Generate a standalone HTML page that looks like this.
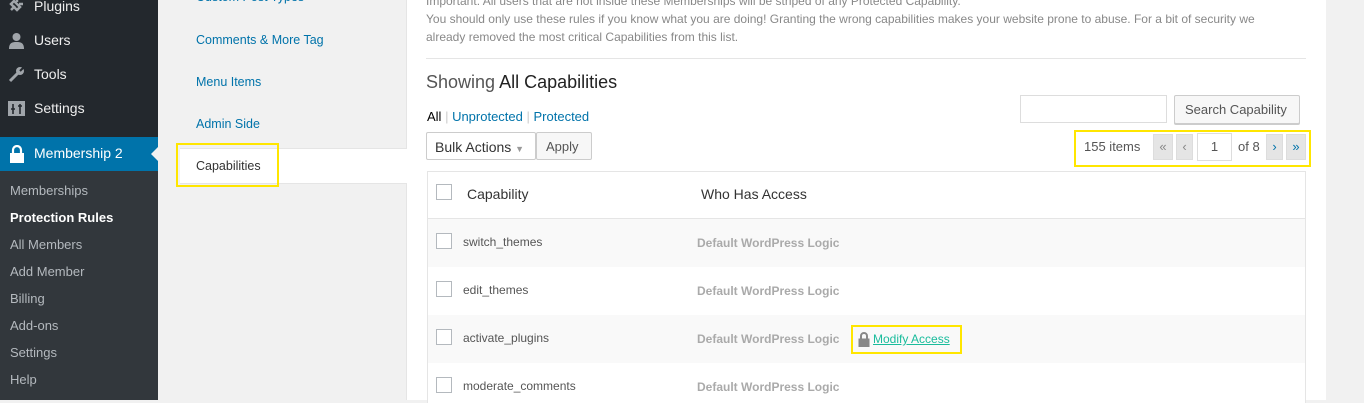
<!DOCTYPE html>
<html><head><meta charset="utf-8"><style>
*{margin:0;padding:0;box-sizing:border-box}
body{width:1364px;height:400px;overflow:hidden;background:#f1f1f1;font-family:"Liberation Sans",sans-serif;position:relative}
.a{position:absolute;white-space:nowrap}
#side{left:0;top:0;width:158px;height:400px;background:#32373c}
#top{left:0;top:0;width:158px;height:137px;background:#23282d}
.mi{color:#eee;font-size:14px;left:34px}
.ic{left:8px;width:17px;height:17px}
#m2{left:0;top:137px;width:158px;height:34px;background:#0073aa}
.sub{left:10px;color:#b4b9be;font-size:13px}
.nav{left:196px;color:#0073aa;font-size:12.5px}
#panel{left:406px;top:0;width:920px;height:400px;background:#fff;border-left:1px solid #e5e5e5}
.row{left:427px;width:879px;height:48px;border-left:1px solid #e5e5e5;border-right:1px solid #e5e5e5}
.cb{width:16px;height:16px;border:1px solid #b4b9be;background:#fff;left:436px}
.cap{left:463px;font-size:12px;color:#555}
.who{left:697px;font-size:12px;color:#aaa;font-weight:bold}
.btn{background:#f7f7f7;border:1px solid #ccc;border-radius:2px;color:#555;font-size:13px}
.pg{background:#e5e5e5;border:1px solid #ddd;color:#888;font-size:13px;text-align:center;height:26px;top:134px;line-height:24px}
</style></head><body>
<div class="a" id="side"></div>
<div class="a" id="top"></div>
<div class="a mi" style="top:-2px">Plugins</div>
<div class="a mi" style="top:32px">Users</div>
<div class="a mi" style="top:66px">Tools</div>
<div class="a mi" style="top:100px">Settings</div>
<svg class="a ic" style="top:-4px" viewBox="0 0 17 17"><path d="M3 14l4-4 M6 5l6 6 -3 3 -6-6z M9 2v4 M15 8h-4" stroke="#a0a5aa" stroke-width="2.5" fill="none"/></svg>
<svg class="a ic" style="top:32px" viewBox="0 0 17 17"><circle cx="8.5" cy="5" r="4" fill="#a0a5aa"/><path d="M1 17c0-6 3-7 7.5-7s7.5 1 7.5 7z" fill="#a0a5aa"/></svg>
<svg class="a ic" style="top:66px" viewBox="0 0 17 17"><path d="M2 15l8-8" stroke="#a0a5aa" stroke-width="3"/><circle cx="12" cy="5" r="4" fill="#a0a5aa"/><path d="M12 5l4-4" stroke="#23282d" stroke-width="2"/></svg>
<svg class="a ic" style="top:100px" viewBox="0 0 17 17"><rect x="0" y="1" width="17" height="15" fill="#a0a5aa"/><path d="M5 4v10M12 4v10M3 9h4M10 6h4" stroke="#23282d" stroke-width="1.6"/></svg>
<div class="a" id="m2"></div>
<svg class="a" style="left:9px;top:145px" width="16" height="18" viewBox="0 0 16 18"><path d="M4 8V5a4 4 0 0 1 8 0v3" stroke="#fff" stroke-width="2.2" fill="none"/><rect x="1" y="8" width="14" height="10" fill="#fff"/></svg>
<div class="a" style="left:34px;top:145px;color:#fff;font-size:14px">Membership 2</div>
<div class="a" style="left:151px;top:147px;width:0;height:0;border-top:7px solid transparent;border-bottom:7px solid transparent;border-right:7px solid #f1f1f1"></div>
<div class="a sub" style="top:183px">Memberships</div>
<div class="a sub" style="top:210px;color:#fff;font-weight:bold">Protection Rules</div>
<div class="a sub" style="top:237px">All Members</div>
<div class="a sub" style="top:264px">Add Member</div>
<div class="a sub" style="top:291px">Billing</div>
<div class="a sub" style="top:318px">Add-ons</div>
<div class="a sub" style="top:345px">Settings</div>
<div class="a sub" style="top:372px">Help</div>

<div class="a nav" style="top:-10px">Custom Post Types</div>
<div class="a nav" style="top:33px">Comments &amp; More Tag</div>
<div class="a nav" style="top:75px">Menu Items</div>
<div class="a nav" style="top:117px">Admin Side</div>
<div class="a" id="panel"></div>
<div class="a" style="left:180px;top:148px;width:227px;height:36px;background:#fff;border-top:1px solid #e5e5e5;border-bottom:1px solid #e5e5e5"></div>
<div class="a" style="left:196px;top:159px;font-size:12.5px;color:#333">Capabilities</div>
<div class="a" style="left:176px;top:143px;width:103px;height:44px;border:2px solid #ffe600"></div>

<div class="a" style="left:426px;top:-8px;font-size:12px;color:#888;line-height:18px">Important: All users that are not inside these Memberships will be striped of any Protected Capability.<br>You should only use these rules if you know what you are doing! Granting the wrong capabilities makes your website prone to abuse. For a bit of security we<br>already removed the most critical Capabilities from this list.</div>
<div class="a" style="left:426px;top:58px;width:880px;height:1px;background:#e5e5e5"></div>
<div class="a" style="left:426px;top:72px;font-size:18px;color:#555">Showing <span style="color:#222">All Capabilities</span></div>
<div class="a" style="left:427px;top:109px;font-size:13px;color:#ccc"><span style="color:#000">All</span> | <span style="color:#0073aa">Unprotected</span> | <span style="color:#0073aa">Protected</span></div>
<div class="a btn" style="left:426px;top:132px;width:110px;height:28px;background:#fff;color:#333;padding:6px 8px;font-size:14px">Bulk Actions <span style="color:#999;font-size:9px">▼</span></div>
<div class="a btn" style="left:536px;top:132px;width:56px;height:28px;padding:6px 9px">Apply</div>
<div class="a" style="left:1020px;top:95px;width:147px;height:28px;border:1px solid #ddd;background:#fff"></div>
<div class="a btn" style="left:1174px;top:95px;width:126px;height:29px;padding:6px 10px;box-shadow:0 1px 0 #ccc">Search Capability</div>
<div class="a" style="left:1074px;top:130px;width:237px;height:37px;border:2px solid #ffe600"></div>
<div class="a" style="left:1084px;top:139px;font-size:13px;color:#555">155 items</div>
<div class="a pg" style="left:1153px;width:20px">«</div>
<div class="a pg" style="left:1176px;width:17px">‹</div>
<div class="a" style="left:1197px;top:133px;width:35px;height:28px;border:1px solid #ddd;background:#fff;text-align:center;line-height:26px;font-size:13px;color:#555">1</div>
<div class="a" style="left:1238px;top:139px;font-size:13px;color:#555">of 8</div>
<div class="a pg" style="left:1266px;width:17px;color:#0073aa">›</div>
<div class="a pg" style="left:1286px;width:20px;color:#0073aa">»</div>

<div class="a row" style="top:171px;height:48px;background:#fff;border-top:1px solid #e5e5e5;border-bottom:1px solid #e5e5e5"></div>
<div class="a cb" style="top:184px"></div>
<div class="a" style="left:467px;top:186px;font-size:14px;color:#333">Capability</div>
<div class="a" style="left:701px;top:186px;font-size:14px;color:#333">Who Has Access</div>

<div class="a row" style="top:219px;background:#f9f9f9"></div>
<div class="a row" style="top:267px;background:#fff"></div>
<div class="a row" style="top:315px;background:#f9f9f9"></div>
<div class="a row" style="top:363px;background:#fff;height:40px"></div>
<div class="a cb" style="top:233px"></div><div class="a cap" style="top:235px">switch_themes</div><div class="a who" style="top:236px">Default WordPress Logic</div>
<div class="a cb" style="top:281px"></div><div class="a cap" style="top:283px">edit_themes</div><div class="a who" style="top:284px">Default WordPress Logic</div>
<div class="a cb" style="top:329px"></div><div class="a cap" style="top:331px">activate_plugins</div><div class="a who" style="top:332px">Default WordPress Logic</div>
<div class="a cb" style="top:377px"></div><div class="a cap" style="top:379px">moderate_comments</div><div class="a who" style="top:380px">Default WordPress Logic</div>
<div class="a" style="left:851px;top:325px;width:111px;height:29px;border:2px solid #ffe600"></div>
<svg class="a" style="left:858px;top:332px" width="12" height="15" viewBox="0 0 12 15"><path d="M3 7V4a3 3 0 0 1 6 0v3" stroke="#888" stroke-width="2" fill="none"/><rect x="0.5" y="6.5" width="11" height="8.5" fill="#888"/></svg>
<div class="a" style="left:873px;top:332px;font-size:12px;color:#1abc9c;text-decoration:underline">Modify Access</div>
</body></html>
